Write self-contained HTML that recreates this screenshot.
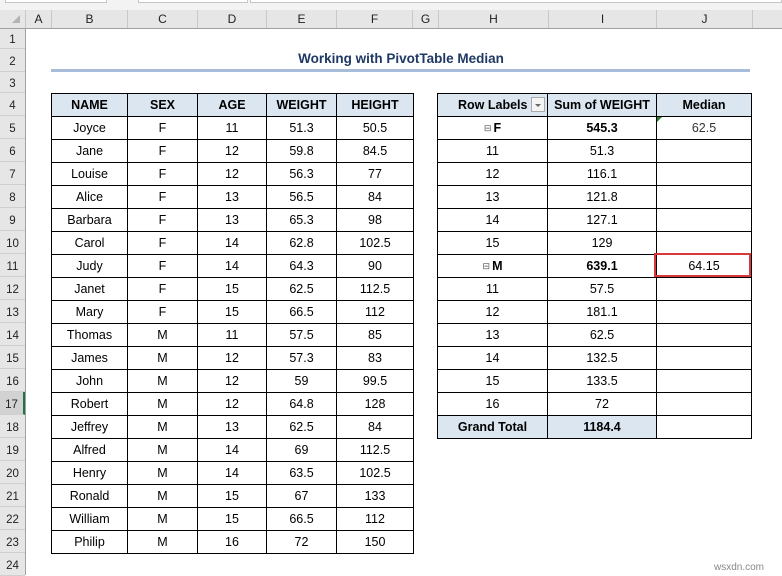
<!DOCTYPE html>
<html><head><meta charset="utf-8"><style>
body{margin:0;width:782px;height:575px;background:#fff;position:relative;overflow:hidden;font-family:"Liberation Sans",Arial,sans-serif;font-size:12px;color:#000}
.abs{position:absolute}
.top{left:0;top:0;width:782px;height:10px;background:#f3f3f3}
.box{top:0;height:2px;border:1px solid #c6c6c6;border-top:none;background:#fff}
.colh{left:0;top:10px;width:782px;height:18px;background:#e6e6e6;border-bottom:1px solid #a0a0a0}
.ch{position:absolute;top:0;height:18px;line-height:18px;text-align:center;border-right:1px solid #c8c8c8;color:#222;font-size:12px}
.rowh{left:0;top:29px;width:25px;height:546px;background:#e6e6e6;border-right:1px solid #a0a0a0}
.rn{position:absolute;left:0;width:25px;text-align:center;color:#222;font-size:11.5px;border-bottom:1px solid #cfcfcf;box-sizing:border-box;padding-top:3px}
table{border-collapse:collapse;position:absolute;table-layout:fixed}
td{border:1px solid #000;height:22px;padding:0;text-align:center;font-size:12.5px;line-height:22px;white-space:nowrap;overflow:hidden}
.hd td{background:#dce6f1;font-weight:bold}
b{font-weight:bold}
.gt td{background:#dce6f1}
.gt td:last-child{background:#fff}
.mi{font-size:9px;color:#555;vertical-align:1px;margin-right:2px}
</style></head><body>
<div class="abs top"></div>
<div class="abs box" style="left:5px;width:100px"></div>
<div class="abs box" style="left:138px;width:108px"></div>
<div class="abs box" style="left:250px;width:530px"></div>
<div class="abs colh">
<div class="ch" style="left:0;width:25px;"><span style="position:absolute;left:12px;top:5px;width:0;height:0;border-left:8px solid transparent;border-bottom:8px solid #b4b4b4"></span></div>
<div class="ch" style="left:26px;width:25px">A</div>
<div class="ch" style="left:52px;width:75px">B</div>
<div class="ch" style="left:128px;width:69px">C</div>
<div class="ch" style="left:198px;width:68px">D</div>
<div class="ch" style="left:267px;width:69px">E</div>
<div class="ch" style="left:337px;width:75px">F</div>
<div class="ch" style="left:413px;width:25px">G</div>
<div class="ch" style="left:439px;width:109px">H</div>
<div class="ch" style="left:549px;width:107px">I</div>
<div class="ch" style="left:657px;width:95px">J</div>
</div>
<div class="abs rowh">
<div class="rn" style="top:0;height:20px;line-height:20px;padding-top:1px">1</div>
<div class="rn" style="top:20px;height:23px;line-height:20px">2</div>
<div class="rn" style="top:43px;height:21px;line-height:18px">3</div>
<div class="rn" style="top:64px;height:23px;line-height:20px">4</div>
<div class="rn" style="top:87px;height:23px;line-height:20px">5</div>
<div class="rn" style="top:110px;height:23px;line-height:20px">6</div>
<div class="rn" style="top:133px;height:23px;line-height:20px">7</div>
<div class="rn" style="top:156px;height:23px;line-height:20px">8</div>
<div class="rn" style="top:179px;height:23px;line-height:20px">9</div>
<div class="rn" style="top:202px;height:23px;line-height:20px">10</div>
<div class="rn" style="top:225px;height:23px;line-height:20px">11</div>
<div class="rn" style="top:248px;height:23px;line-height:20px">12</div>
<div class="rn" style="top:271px;height:23px;line-height:20px">13</div>
<div class="rn" style="top:294px;height:23px;line-height:20px">14</div>
<div class="rn" style="top:317px;height:23px;line-height:20px">15</div>
<div class="rn" style="top:340px;height:23px;line-height:20px">16</div>
<div class="rn" style="top:363px;height:23px;line-height:20px;background:#d2d2d2;border-right:2px solid #217346">17</div>
<div class="rn" style="top:386px;height:23px;line-height:20px">18</div>
<div class="rn" style="top:409px;height:23px;line-height:20px">19</div>
<div class="rn" style="top:432px;height:23px;line-height:20px">20</div>
<div class="rn" style="top:455px;height:23px;line-height:20px">21</div>
<div class="rn" style="top:478px;height:23px;line-height:20px">22</div>
<div class="rn" style="top:501px;height:23px;line-height:20px">23</div>
<div class="rn" style="top:524px;height:23px;line-height:20px">24</div>
</div>
<div class="abs" style="left:51px;top:51px;width:700px;text-align:center;font-weight:bold;font-size:13.5px;color:#1f3864">Working with PivotTable Median</div>
<div class="abs" style="left:51px;top:69px;width:699px;height:3px;background:#a6bcd8"></div>

<table style="left:51px;top:93px;width:362px">
<colgroup><col style="width:76px"><col style="width:70px"><col style="width:69px"><col style="width:70px"><col style="width:77px"></colgroup>
<tr class="hd"><td>NAME</td><td>SEX</td><td>AGE</td><td>WEIGHT</td><td>HEIGHT</td></tr>
<tr><td>Joyce</td><td>F</td><td>11</td><td>51.3</td><td>50.5</td></tr>
<tr><td>Jane</td><td>F</td><td>12</td><td>59.8</td><td>84.5</td></tr>
<tr><td>Louise</td><td>F</td><td>12</td><td>56.3</td><td>77</td></tr>
<tr><td>Alice</td><td>F</td><td>13</td><td>56.5</td><td>84</td></tr>
<tr><td>Barbara</td><td>F</td><td>13</td><td>65.3</td><td>98</td></tr>
<tr><td>Carol</td><td>F</td><td>14</td><td>62.8</td><td>102.5</td></tr>
<tr><td>Judy</td><td>F</td><td>14</td><td>64.3</td><td>90</td></tr>
<tr><td>Janet</td><td>F</td><td>15</td><td>62.5</td><td>112.5</td></tr>
<tr><td>Mary</td><td>F</td><td>15</td><td>66.5</td><td>112</td></tr>
<tr><td>Thomas</td><td>M</td><td>11</td><td>57.5</td><td>85</td></tr>
<tr><td>James</td><td>M</td><td>12</td><td>57.3</td><td>83</td></tr>
<tr><td>John</td><td>M</td><td>12</td><td>59</td><td>99.5</td></tr>
<tr><td>Robert</td><td>M</td><td>12</td><td>64.8</td><td>128</td></tr>
<tr><td>Jeffrey</td><td>M</td><td>13</td><td>62.5</td><td>84</td></tr>
<tr><td>Alfred</td><td>M</td><td>14</td><td>69</td><td>112.5</td></tr>
<tr><td>Henry</td><td>M</td><td>14</td><td>63.5</td><td>102.5</td></tr>
<tr><td>Ronald</td><td>M</td><td>15</td><td>67</td><td>133</td></tr>
<tr><td>William</td><td>M</td><td>15</td><td>66.5</td><td>112</td></tr>
<tr><td>Philip</td><td>M</td><td>16</td><td>72</td><td>150</td></tr>
</table>

<table style="left:437px;top:93px;width:314px">
<colgroup><col style="width:110px"><col style="width:109px"><col style="width:95px"></colgroup>
<tr class="hd"><td style="text-align:left;padding-left:20px;position:relative">Row Labels<span style="position:absolute;right:2px;top:3px;width:14px;height:15px;border:1px solid #aaa;background:#f4f4f4;box-sizing:border-box"><span style="position:absolute;left:3px;top:6px;border-left:3px solid transparent;border-right:3px solid transparent;border-top:3px solid #666"></span></span></td><td>Sum of WEIGHT</td><td>Median</td></tr>
<tr><td><span class="mi">⊟</span><b>F</b></td><td><b>545.3</b></td><td style="position:relative;color:#333"><span style="position:absolute;left:0;top:0;border-right:5px solid transparent;border-top:5px solid #2e7d32"></span>62.5</td></tr>
<tr><td>11</td><td>51.3</td><td></td></tr>
<tr><td>12</td><td>116.1</td><td></td></tr>
<tr><td>13</td><td>121.8</td><td></td></tr>
<tr><td>14</td><td>127.1</td><td></td></tr>
<tr><td>15</td><td>129</td><td></td></tr>
<tr><td><span class="mi">⊟</span><b>M</b></td><td><b>639.1</b></td><td>64.15</td></tr>
<tr><td>11</td><td>57.5</td><td></td></tr>
<tr><td>12</td><td>181.1</td><td></td></tr>
<tr><td>13</td><td>62.5</td><td></td></tr>
<tr><td>14</td><td>132.5</td><td></td></tr>
<tr><td>15</td><td>133.5</td><td></td></tr>
<tr><td>16</td><td>72</td><td></td></tr>
<tr class="gt"><td><b>Grand Total</b></td><td><b>1184.4</b></td><td></td></tr>
</table>
<div class="abs" style="left:654px;top:253px;width:93px;height:20px;border:2px solid #d9383a"></div>
<div class="abs" style="left:714px;top:562px;font-size:10px;color:#888">wsxdn.com</div>
</body></html>
